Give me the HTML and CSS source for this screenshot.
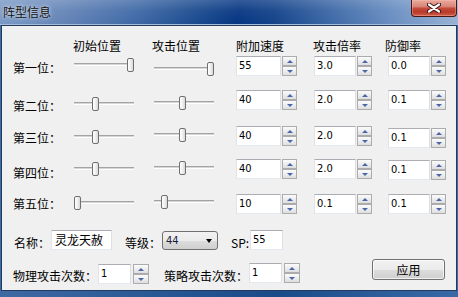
FILE: index.html
```html
<!DOCTYPE html>
<html>
<head>
<meta charset="utf-8">
<link rel="stylesheet" href="styles.css">
</head>
<body>
<div class="window">
  <div class="titlebar">
    <span class="title">阵型信息</span>
    <div class="close">
      <svg width="14" height="10" viewBox="0 0 14 10">
        <path d="M2 1.5 L12 8.5 M12 1.5 L2 8.5" stroke="#3a1410" stroke-width="4.2" stroke-linecap="round" fill="none"/>
        <path d="M2 1.5 L12 8.5 M12 1.5 L2 8.5" stroke="#ffffff" stroke-width="2.2" stroke-linecap="round" fill="none"/>
      </svg>
    </div>
  </div>
  <div class="client">
    <div class="grid">
      <div></div>
      <div class="head nudge-1">初始位置</div>
      <div class="head nudge-2">攻击位置</div>
      <div class="head">附加速度</div>
      <div class="head nudge-1">攻击倍率</div>
      <div class="head nudge-3">防御率</div>

      <div class="label mt7">第一位：</div>
      <div class="slider mt4"><div class="track"></div><div class="thumb" style="left:53px"></div></div>
      <div class="slider mt8"><div class="track"></div><div class="thumb" style="left:53px"></div></div>
      <div class="spinbox mt2"><div class="edit w45">55</div><div class="spin"><div class="sb up"></div><div class="sb down"></div></div></div>
      <div class="spinbox mt2"><div class="edit w42">3.0</div><div class="spin"><div class="sb up"></div><div class="sb down"></div></div></div>
      <div class="spinbox mt2"><div class="edit w42">0.0</div><div class="spin"><div class="sb up"></div><div class="sb down"></div></div></div>

      <div class="label mt9">第二位：</div>
      <div class="slider mt7"><div class="track"></div><div class="thumb" style="left:18px"></div></div>
      <div class="slider mt6"><div class="track"></div><div class="thumb" style="left:25px"></div></div>
      <div class="spinbox mt0"><div class="edit w45">40</div><div class="spin"><div class="sb up"></div><div class="sb down"></div></div></div>
      <div class="spinbox mt0"><div class="edit w42">2.0</div><div class="spin"><div class="sb up"></div><div class="sb down"></div></div></div>
      <div class="spinbox mt0"><div class="edit w42">0.1</div><div class="spin"><div class="sb up"></div><div class="sb down"></div></div></div>

      <div class="label mt6">第三位：</div>
      <div class="slider mt5"><div class="track"></div><div class="thumb" style="left:18px"></div></div>
      <div class="slider mt3"><div class="track"></div><div class="thumb" style="left:25px"></div></div>
      <div class="spinbox mt1"><div class="edit w45">40</div><div class="spin"><div class="sb up"></div><div class="sb down"></div></div></div>
      <div class="spinbox mt1"><div class="edit w42">2.0</div><div class="spin"><div class="sb up"></div><div class="sb down"></div></div></div>
      <div class="spinbox mt3"><div class="edit w42">0.1</div><div class="spin"><div class="sb up"></div><div class="sb down"></div></div></div>

      <div class="label mt7">第四位：</div>
      <div class="slider mt3"><div class="track"></div><div class="thumb" style="left:18px"></div></div>
      <div class="slider mt2"><div class="track"></div><div class="thumb" style="left:25px"></div></div>
      <div class="spinbox mt0"><div class="edit w45">40</div><div class="spin"><div class="sb up"></div><div class="sb down"></div></div></div>
      <div class="spinbox mt0"><div class="edit w42">2.0</div><div class="spin"><div class="sb up"></div><div class="sb down"></div></div></div>
      <div class="spinbox mt1"><div class="edit w42">0.1</div><div class="spin"><div class="sb up"></div><div class="sb down"></div></div></div>

      <div class="label mt3">第五位：</div>
      <div class="slider mt2"><div class="track"></div><div class="thumb" style="left:0px"></div></div>
      <div class="slider mt1"><div class="track"></div><div class="thumb" style="left:7px"></div></div>
      <div class="spinbox mt0"><div class="edit w45">10</div><div class="spin"><div class="sb up"></div><div class="sb down"></div></div></div>
      <div class="spinbox mt0"><div class="edit w42">0.1</div><div class="spin"><div class="sb up"></div><div class="sb down"></div></div></div>
      <div class="spinbox mt0"><div class="edit w42">0.1</div><div class="spin"><div class="sb up"></div><div class="sb down"></div></div></div>
    </div>

    <div class="row row-a">
      <div class="label lab-name mt6">名称：</div>
      <div class="edit cjk w61">灵龙天赦</div>
      <div class="label lab-level mt6">等级：</div>
      <div class="combo mt1"><span class="combo-text">44</span><span class="arrow"></span></div>
      <div class="label lab-sp mt6">SP:</div>
      <div class="edit w33">55</div>
    </div>

    <div class="row row-b">
      <div class="label lab-phys mt10">物理攻击次数：</div>
      <div class="spinbox mt5"><div class="edit w33">1</div><div class="spin gap2"><div class="sb up"></div><div class="sb down"></div></div></div>
      <div class="label lab-strat mt10">策略攻击次数：</div>
      <div class="spinbox mt4"><div class="edit w33">1</div><div class="spin gap2"><div class="sb up"></div><div class="sb down"></div></div></div>
      <div class="button">应用</div>
    </div>
  </div>
</div>
</body>
</html>
```

FILE: styles.css
```css
* { box-sizing: border-box; }
html, body { margin: 0; padding: 0; }
body {
  width: 458px;
  height: 297px;
  overflow: hidden;
  font-family: "Noto Sans CJK SC", "Noto Sans", sans-serif;
  font-size: 12px;
  color: #000;
  background: #2a548c;
}
.window {
  width: 458px;
  height: 297px;
  display: flex;
  flex-direction: column;
  background: linear-gradient(to right, #3d6aa3 0%, #24528f 45%, #1b4a88 60%, #3a6aa6 100%);
}
.titlebar {
  height: 25px;
  flex: none;
  display: flex;
  align-items: flex-start;
  border-bottom: 1px solid #a7bcd8;
  background:
    linear-gradient(to bottom, rgba(255,255,255,0.18) 0%, rgba(255,255,255,0.05) 45%, rgba(0,0,0,0) 100%),
    linear-gradient(100deg, #7b9ac6 0%, #6585b7 14%, #3f69a6 30%, #1e4d90 42%, #053682 52%, #14438a 60%, #3c68a6 72%, #6a8fc2 86%, #9ab3d4 100%);
}
.title {
  padding-left: 3px;
  line-height: 23px;
  font-size: 12px;
  color: #111;
  text-shadow: 0 0 5px rgba(255,255,255,0.75), 0 0 2px rgba(255,255,255,0.5);
}
.close {
  margin-left: auto;
  margin-right: 1px;
  width: 46px;
  height: 17px;
  display: flex;
  align-items: center;
  justify-content: center;
  border: 1px solid #4a1810;
  border-top: none;
  border-radius: 0 0 4px 4px;
  background: linear-gradient(to bottom, #e9a99b 0%, #d9877a 40%, #c44a3a 52%, #b8392a 75%, #d2604a 100%);
  box-shadow: inset 0 0 0 1px rgba(255,200,190,0.35);
}
.client {
  flex: none;
  height: 266px;
  margin: 0 1px;
  border: 1px solid #213c60;
  background: #f0f0f0;
  padding: 13px 11px 0 11px;
}
.grid {
  display: grid;
  grid-template-columns: 61px 80px 82px 78px 74px 59px;
  grid-template-rows: 15px 36px 35px 34px 35px 20px;
  align-items: start;
  justify-items: start;
}
.head, .label {
  line-height: 14px;
  white-space: nowrap;
}
.nudge-1 { margin-left: -1px; }
.nudge-2 { margin-left: -2px; }
.nudge-3 { margin-left: -3px; }

.mt0 { margin-top: 0; }
.mt1 { margin-top: 1px; }
.mt2 { margin-top: 2px; }
.mt3 { margin-top: 3px; }
.mt4 { margin-top: 4px; }
.mt5 { margin-top: 5px; }
.mt6 { margin-top: 6px; }
.mt7 { margin-top: 7px; }
.mt8 { margin-top: 8px; }
.mt9 { margin-top: 9px; }
.mt10 { margin-top: 10px; }

.slider {
  position: relative;
  width: 60px;
  height: 14px;
}
.track {
  position: absolute;
  left: 0;
  right: 0;
  top: 5px;
  height: 3px;
  background: linear-gradient(to bottom, #a3a3a3 0, #a3a3a3 1px, #d6d6d6 1px, #d6d6d6 2px, #ffffff 2px);
}
.thumb {
  position: absolute;
  top: 0;
  width: 7px;
  height: 14px;
  border: 1px solid #707070;
  border-radius: 2px;
  background: linear-gradient(to right, #ffffff 0%, #f0f0f0 50%, #d8d8d8 100%);
}

.spinbox {
  display: flex;
  align-items: flex-start;
}
.edit {
  height: 20px;
  border: 1px solid;
  border-color: #abadb3 #dbdfe6 #e3e9ef #e2e3ea;
  background: #fff;
  padding-left: 2px;
  font-family: Tahoma, "DejaVu Sans Condensed", "DejaVu Sans", sans-serif;
  font-size: 11px;
  line-height: 18px;
  white-space: nowrap;
}
.edit.cjk {
  font-family: "Noto Sans CJK SC", sans-serif;
  font-size: 12px;
  padding-left: 3px;
}
.w33 { width: 33px; }
.w42 { width: 42px; }
.w45 { width: 45px; }
.w61 { width: 61px; }

.spin {
  width: 15px;
  height: 20px;
  margin-left: 1px;
  display: flex;
  flex-direction: column;
}
.spin.gap2 { margin-left: 2px; width: 16px; }
.sb {
  flex: 1;
  border: 1px solid #acacac;
  background: linear-gradient(to bottom, #fbfbfb 0%, #ececec 55%, #dedede 100%);
  display: flex;
  align-items: center;
  justify-content: center;
}
.sb.up::before {
  content: "";
  border-left: 3px solid transparent;
  border-right: 3px solid transparent;
  border-bottom: 3px solid #4b66a8;
}
.sb.down::before {
  content: "";
  border-left: 3px solid transparent;
  border-right: 3px solid transparent;
  border-top: 3px solid #4b66a8;
}

.row {
  display: flex;
  align-items: flex-start;
}
.row-a { margin-top: 16px; height: 20px; }
.row-b { margin-top: 9px; }

.lab-name { width: 37px; margin-left: 1px; }
.lab-level { width: 37px; margin-left: 13px; }
.lab-sp { width: 19px; margin-left: 13px; }
.lab-phys { width: 85px; }
.lab-strat { width: 85px; margin-left: 15px; }

.combo {
  width: 56px;
  height: 19px;
  border: 1px solid #707070;
  border-radius: 3px;
  background: linear-gradient(to bottom, #f2f2f2 0%, #ebebeb 50%, #dddddd 51%, #cfcfcf 100%);
  display: flex;
  align-items: center;
  padding-left: 3px;
  padding-right: 5px;
}
.combo-text {
  font-family: Tahoma, "DejaVu Sans Condensed", "DejaVu Sans", sans-serif;
  font-size: 11px;
  color: #1a1a40;
}
.arrow {
  margin-left: auto;
  border-left: 3.5px solid transparent;
  border-right: 3.5px solid transparent;
  border-top: 4px solid #000;
}

.button {
  margin-left: auto;
  width: 73px;
  height: 21px;
  border: 1px solid #707070;
  border-radius: 3px;
  background: linear-gradient(to bottom, #f2f2f2 0%, #ebebeb 50%, #dddddd 51%, #cfcfcf 100%);
  box-shadow: inset 0 0 0 1px rgba(255,255,255,0.7);
  display: flex;
  align-items: center;
  justify-content: center;
  line-height: 14px;
}
```
